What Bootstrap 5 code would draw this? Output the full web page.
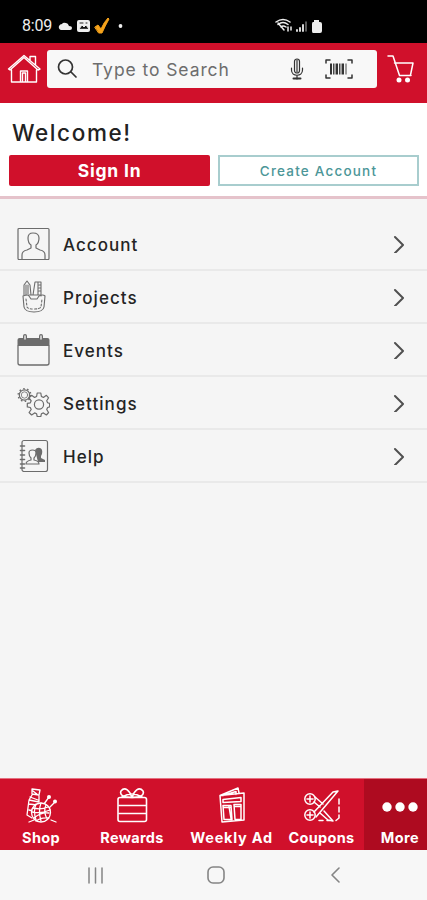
<!DOCTYPE html>
<html lang="en">
<head>
<meta charset="utf-8">
<meta name="viewport" content="width=device-width, initial-scale=1">
<title>More</title>
<link href="https://cdn.jsdelivr.net/npm/bootstrap@5.3.0/dist/css/bootstrap.min.css" rel="stylesheet">
<style>
body{font-family:Inter,"Liberation Sans",sans-serif;background:#f5f5f5;color:#222;height:900px;overflow:hidden;white-space:nowrap}
svg{display:block;flex:none;fill:none;stroke:currentColor;stroke-linecap:round;stroke-linejoin:round}
.solid{fill:currentColor;stroke:none}
.status{height:43px;background:#000;color:#eee;padding:10px 0 0 22px}
.clock{font:16px/32px Roboto,sans-serif;width:31px;letter-spacing:-.2px}
.signal{margin-left:142px}
.topbar{height:60px;background:#d0102b;padding:7px 12px 0 7px}
.search{width:330px;height:38px;background:#f8f8f8;border-radius:3px;margin-left:6px;padding:0 24px 0 10px;color:#333}
.hint{font-size:17.5px;color:#6d6d6d;margin:2px 0 0 13px;width:198px;letter-spacing:.92px}
.welcome{height:96px;background:#fff;border-bottom:3px solid #e5c3cb;padding:14px 8px 0 9px}
.welcome h1{font-size:22.5px;line-height:32px;letter-spacing:1.6px;font-weight:500;margin:0 0 6px 3px}
.act{height:31px;width:201px;padding:0;border-radius:2px;line-height:32px}
.sign{background:#d0102b;color:#fff;font-size:17.5px;font-weight:700;border:0;letter-spacing:.8px}
.create{border:2px solid #a8cdce;color:#4c9698;font-size:13.5px;font-weight:500;border-radius:0;line-height:29px;letter-spacing:1.2px}
.menu{padding-top:19px}
.menu .list-group-item{height:53px;border:0;border-bottom:2px solid #e9e9e9!important;background:transparent;color:#242424;padding:0 22px 0 17px;font-size:17px;font-weight:500;letter-spacing:1.05px}
.menu svg{color:#6c6c6c}
.menu .label{margin:4px 0 0 13px}
.menu .chev{color:#505050}
.tabs{height:72px;background:#d0102b;color:#fff;border-top:1px solid #e4707f;overflow:hidden}
.tab{flex:none;font-size:14.5px;font-weight:700;padding-top:8px;line-height:17px;letter-spacing:.3px}
.tab svg{margin-bottom:5px}
.t1{width:82px}.t2{width:100px}.t3{width:99px;letter-spacing:.75px}.t4{width:83px;padding-right:2px}.t5{width:72px;background:#ae0b20;letter-spacing:.45px}
.sys{height:50px;background:#f7f7f7;color:#858585;padding:0 86px}
.homekey{margin-right:5px}
</style>
</head>
<body class="d-flex flex-column">
<header>
<div class="status d-flex">
  <span class="clock">8:09</span>
  <svg width="80" height="32" viewBox="53 10 80 32" stroke="none">
    <path class="solid" d="M61 30a3 3 0 0 1-2-4q1-2 3-2 1-2 4-1 2 0 3 3 3 0 3 2 0 2-2 2z"/>
    <rect class="solid" x="77" y="20" width="13" height="12" rx="2"/>
    <path d="M79 29l3-4 2 2 2-2 3 4z" fill="#111"/><path d="M80 23h3M86 23h1" stroke="#222"/>
    <path d="M95 27l3-2 3 4q3-7 7-11l1 1q-4 7-7 14h-3z" fill="#f6a31b" stroke="#f6a31b"/>
    <circle class="solid" cx="120.500" cy="26" r="1.900"/>
  </svg>
  <svg width="50" height="32" viewBox="275 10 50 32" class="signal">
    <path d="M276 22q7-5 14 0M278 24.500q5-4 10 0M281 27q2-2 5 0M284 30l-6-7M288 27v4M291 30v-3" stroke-width="1.500"/>
    <path d="M297 31v-1M300 31v-3M303 31v-6" stroke-width="1.800"/><path d="M306 31v-9" stroke="#777" stroke-width="1.500"/>
    <path class="solid" d="M313 22h1v-2h5v2h1q2 0 2 2v7q0 2-2 2h-7q-1 0-1-2v-7q0-2 1-2z"/>
  </svg>
</div>
<div class="topbar d-flex text-white">
  <svg width="34" height="38" viewBox="7 50 34 38" stroke-width="1.400">
    <path d="M8.500 69L24 55.500 40 69l-2 1-14-12.500L10 70zM11.500 70v12h25V70M20.500 82V71h7v11M22.500 82v-9h3v9M30 60v-3.500h5.500V65"/>
  </svg>
  <div class="search d-flex align-items-center">
    <svg width="22" height="22" viewBox="0 0 22 22" stroke-width="1.700"><circle cx="8.500" cy="9" r="7"/><path d="M14 14l5 5"/></svg>
    <span class="hint">Type to Search</span>
    <svg width="14" height="22" viewBox="0 0 14 22" stroke-width="1.200"><rect x="4.500" y="1" width="5" height="14" rx="2.500"/><path d="M7 2v12M1.500 10v2c0 7 11 7 11 0v-2M7 18v3"/><path d="M3.500 20.500h7" stroke-width="2"/></svg>
    <svg class="ms-auto" width="28" height="20" viewBox="0 0 28 20" stroke-width="1.500"><path d="M1 4V1h4M23 1h4v3M1 16v3h4M23 19h4v-3"/><path d="M6 4.500v11M12 4.500v11M18 4.500v11" stroke-width="2" stroke-linecap="butt"/><path d="M8.500 4.500v11M10 4.500v11M14.500 4.500v11M16 4.500v11M21 4.500v11" stroke-width=".9" stroke-linecap="butt"/></svg>
  </div>
  <svg class="ms-auto" width="28" height="38" viewBox="385.500 50 28 38" stroke-width="1.500"><path d="M386.500 56h5l6.500 19.500h11.500M393 63h18.500l-2.500 12"/><circle class="solid" cx="397.500" cy="80" r="2.500"/><circle class="solid" cx="406" cy="80" r="2.500"/></svg>
</div>
</header>
<section class="welcome">
  <h1>Welcome!</h1>
  <div class="d-flex justify-content-between">
    <button class="btn act sign">Sign In</button>
    <button class="btn act create">Create Account</button>
  </div>
</section>
<main class="menu flex-grow-1">
<div class="list-group list-group-flush">
  <a href="#" class="list-group-item d-flex align-items-center">
    <svg width="33" height="33" viewBox="0 0 33 33" stroke-width="1.200"><rect x="1" y="1.500" width="31" height="31" rx="1"/><path d="M5 32v-4q0-4 5-5l4-2v-3q-3-2-3-7 0-5 5-5 6 0 6 5 0 5-3 7v3l4 2q5 1 5 5v4"/></svg>
    <span class="label">Account</span><svg class="chev ms-auto" width="12" height="18" viewBox="0 0 12 18" stroke-width="2"><path d="M2 2l8 8-8 8"/></svg></a>
  <a href="#" class="list-group-item d-flex align-items-center">
    <svg width="33" height="33" viewBox="0 0 33 33" stroke-width="1.100"><path d="M7 15V5l3-4 3 4 1 10M9 5v10M11 5v9M16 15l2-13h6v14M21 2v13M22 5h2M22 8h2M22 11h2M12 15h11"/><path d="M6 16q5-2 6 0l2 3h6l2-3q4-2 6 0l-1 11q-1 5-10 5T7 27z"/><path d="M9 19l1 8q1 2 7 2t7-2l1-8" stroke-dasharray="2 2"/></svg>
    <span class="label">Projects</span><svg class="chev ms-auto" width="12" height="18" viewBox="0 0 12 18" stroke-width="2"><path d="M2 2l8 8-8 8"/></svg></a>
  <a href="#" class="list-group-item d-flex align-items-center">
    <svg width="33" height="33" viewBox="0 0 33 33" stroke-width="1.300"><path d="M1 13v17q0 2 2 2h27q2 0 2-2V13"/><path class="solid" d="M.5 13V7q0-2 2-2h28q2 0 2 2v6z"/><path d="M8 6V3M24 6V3" stroke-width="4"/><path d="M8 6V3M24 6V3" stroke="#e5e5e5" stroke-width="1.500"/></svg>
    <span class="label">Events</span><svg class="chev ms-auto" width="12" height="18" viewBox="0 0 12 18" stroke-width="2"><path d="M2 2l8 8-8 8"/></svg></a>
  <a href="#" class="list-group-item d-flex align-items-center">
    <svg width="33" height="33" viewBox="0 0 33 33" stroke-width="1.200">
      <path d="M19.600 10.500l.6-3.500h3.600l.6 3.500 2 .9 3-2.100 2.200 2.500-1.900 3 .9 2 2 .6v3.500l-2 .6-.9 2 1.900 3-2.200 2.500-3-2.100-2 .9-.6 2.700h-3.600l-.6-2.700-2-.9-3 2.100-2.500-2.500 2.100-3-.9-2-3-.6v-3.500l3-.6.9-2-2.100-3 2.500-2.500 3 2.100z"/><circle cx="22" cy="18.500" r="4.600"/>
      <circle cx="7.500" cy="9" r="5.200"/><circle cx="7.500" cy="9" r="3.200" stroke-width=".8"/><circle cx="7.500" cy="9" r="6.300" stroke-dasharray="1.500 2.450" stroke-width="1.500" stroke-linecap="butt"/></svg>
    <span class="label">Settings</span><svg class="chev ms-auto" width="12" height="18" viewBox="0 0 12 18" stroke-width="2"><path d="M2 2l8 8-8 8"/></svg></a>
  <a href="#" class="list-group-item d-flex align-items-center">
    <svg width="33" height="33" viewBox="0 0 33 33" stroke-width="1.200"><rect x="5" y="1.500" width="25.500" height="31" rx="2"/><path d="M3.500 7h4M3.500 11.500h4M3.500 16h4M3.500 20.500h4M3.500 25h4M3.500 29h4" stroke-width="1.600"/><path class="solid" d="M18 11q2-3 5-2 3 1 2 6l-1 2v2l4 2v2h-7z"/><path d="M9 25q0-3 5-4v-2q-2-2-2-5 0-3 3.500-3t3.500 3q0 3-2 5v2q5 1 5 4z" fill="#f5f5f5"/></svg>
    <span class="label">Help</span><svg class="chev ms-auto" width="12" height="18" viewBox="0 0 12 18" stroke-width="2"><path d="M2 2l8 8-8 8"/></svg></a>
</div>
</main>
<nav class="tabs d-flex">
  <div class="tab t1 d-flex flex-column align-items-center">
    <svg width="34" height="37" viewBox="0 0 34 37" stroke-width="1.300"><path d="M8 2l8 1-1 5-7-1zM8 8l-3 5 10 2V9M5 13L3 28l5 3M5 17l8 1M5 23l4 1M9 4l5 4M6 10l8 3M20 17l5-7M25 21l5-5M27 33l5 2M5 35l5-2"/><circle class="solid" cx="25" cy="10" r="2"/><circle class="solid" cx="31" cy="14.500" r="2"/><circle cx="17" cy="25.500" r="9.500" fill="#d0102b"/><path d="M9 21q8 2 15-1M8 25q9 2 18-2M10 31q7-6 15-5M12 17q-3 7 0 16M17 16q-3 8 0 18M22 18q-3 6 1 14M12 34q5-4 13-3"/></svg>Shop</div>
  <div class="tab t2 d-flex flex-column align-items-center">
    <svg width="34" height="37" viewBox="0 0 34 37" stroke-width="1.600"><rect x="3" y="10.500" width="28.500" height="24" rx="2"/><path d="M4 18.500h27M4 26.500h27M17 10.500C10 10 4 9 6 4c4-5 9 0 11 6.500 2-6.500 7-11.500 11-6.500 2 5-4 6-11 6.500zM7 10q5-3 10-3t10 3"/></svg>Rewards</div>
  <div class="tab t3 d-flex flex-column align-items-center">
    <svg width="30" height="37" viewBox="0 0 30 37" stroke-width="1.500"><path d="M3 8.500L21 1l1 5M3 8.500l24-2.500v27l-22 2zM6 8.500l13-4v3M6 12.500l18-2v4L6 15.500zM6 18.500h8l1 14H7zM17 17.500h7v15h-6zM7 20.500h6M18 19.500h5M12 19.500l2 12"/></svg>Weekly Ad</div>
  <div class="tab t4 d-flex flex-column align-items-center">
    <svg width="38" height="37" viewBox="0 0 38 37" stroke-width="1.500"><circle cx="7" cy="12" r="5.200"/><circle cx="7" cy="28" r="5.200"/><path d="M7 9v6M4 12h6M7 25v6M4 28h6M11 25L30 5l5-1-22 26M11 15l6 5M12 10l8 7M21 24l9 10-5-1-8-7M16 33.500h4M24 33.500h5M36 12v5M36 20v5M36 28v3l-3 2.500"/></svg>Coupons</div>
  <div class="tab t5 d-flex flex-column align-items-center">
    <svg width="36" height="37" viewBox="0 0 36 37" class="solid"><circle cx="5" cy="20" r="4.700"/><circle cx="18" cy="20" r="4.700"/><circle cx="31" cy="20" r="4.700"/></svg>More</div>
</nav>
<footer class="sys d-flex align-items-center justify-content-between">
  <svg width="20" height="17" viewBox="0 0 20 17" stroke-width="1.500"><path d="M3 1v15M9.500 1v15M16 1v15"/></svg>
  <svg class="homekey" width="18" height="18" viewBox="0 0 18 18" stroke-width="1.600"><rect x="1" y="1" width="16" height="16" rx="5"/></svg>
  <svg width="11" height="16" viewBox="0 0 11 16" stroke-width="1.600"><path d="M9 1L2 8l7 7"/></svg>
</footer>
<script src="https://cdn.jsdelivr.net/npm/bootstrap@5.3.0/dist/js/bootstrap.bundle.min.js"></script>
</body>
</html>
